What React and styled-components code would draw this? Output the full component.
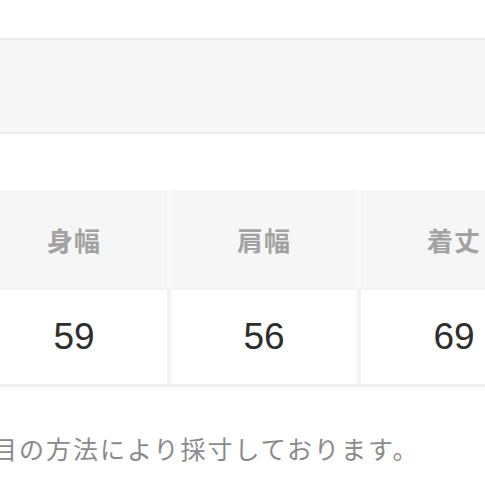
import React from 'react';
import styled, { createGlobalStyle } from 'styled-components';

const GlobalStyle = createGlobalStyle`
  html, body {
    margin: 0;
    padding: 0;
    background: #ffffff;
    overflow: hidden;
  }
  body {
    font-family: "Noto Sans CJK JP", "Liberation Sans", sans-serif;
  }
`

const Page = styled.div`
  width: 485px;
  height: 485px;
  overflow: hidden;
  padding-top: 38px;
  box-sizing: border-box;
`

const NoteBox = styled.div`
  height: 92px;
  margin: 0 -10px;
  background: #f7f7f7;
  border-top: 2px solid #ececec;
  border-bottom: 2px solid #ececec;
`

const Table = styled.div`
  margin-top: 56px;
  margin-left: -19px;
  width: 570px;
  display: grid;
  grid-template-columns: repeat(3, 186px);
  column-gap: 4px;
  row-gap: 2px;
  background: #f3f3f3;
  border-bottom: 3px solid #efefef;
`

const HeadCell = styled.div`
  height: 98px;
  display: flex;
  align-items: center;
  justify-content: center;
  background: #f6f6f6;
  box-shadow: 2px 0 0 #fafafa, -2px 0 0 #fafafa;
  color: #a2a2a2;
  font-size: 26px;
  font-weight: 700;
  letter-spacing: 1px;
`

const ValueCell = styled.div`
  height: 94px;
  display: flex;
  align-items: center;
  justify-content: center;
  background: #ffffff;
  color: #2e2e2e;
  font-family: "Liberation Sans", Arial, sans-serif;
  font-size: 37px;
`

const Caption = styled.p`
  margin: 46px 0 0 -8px;
  white-space: nowrap;
  color: #8a8a8a;
  font-size: 25px;
  letter-spacing: 2px;
  line-height: 1.2;
`

const columns = [
  { label: '身幅', value: '59' },
  { label: '肩幅', value: '56' },
  { label: '着丈', value: '69' },
];

const App = () => {
  return (
    <Page>
      <GlobalStyle />
      <NoteBox />
      <Table>
        {columns.map((c) => (
          <HeadCell key={c.label}>{c.label}</HeadCell>
        ))}
        {columns.map((c) => (
          <ValueCell key={c.label}>{c.value}</ValueCell>
        ))}
      </Table>
      <Caption>目の方法により採寸しております。</Caption>
    </Page>
  )
}

export default App;
